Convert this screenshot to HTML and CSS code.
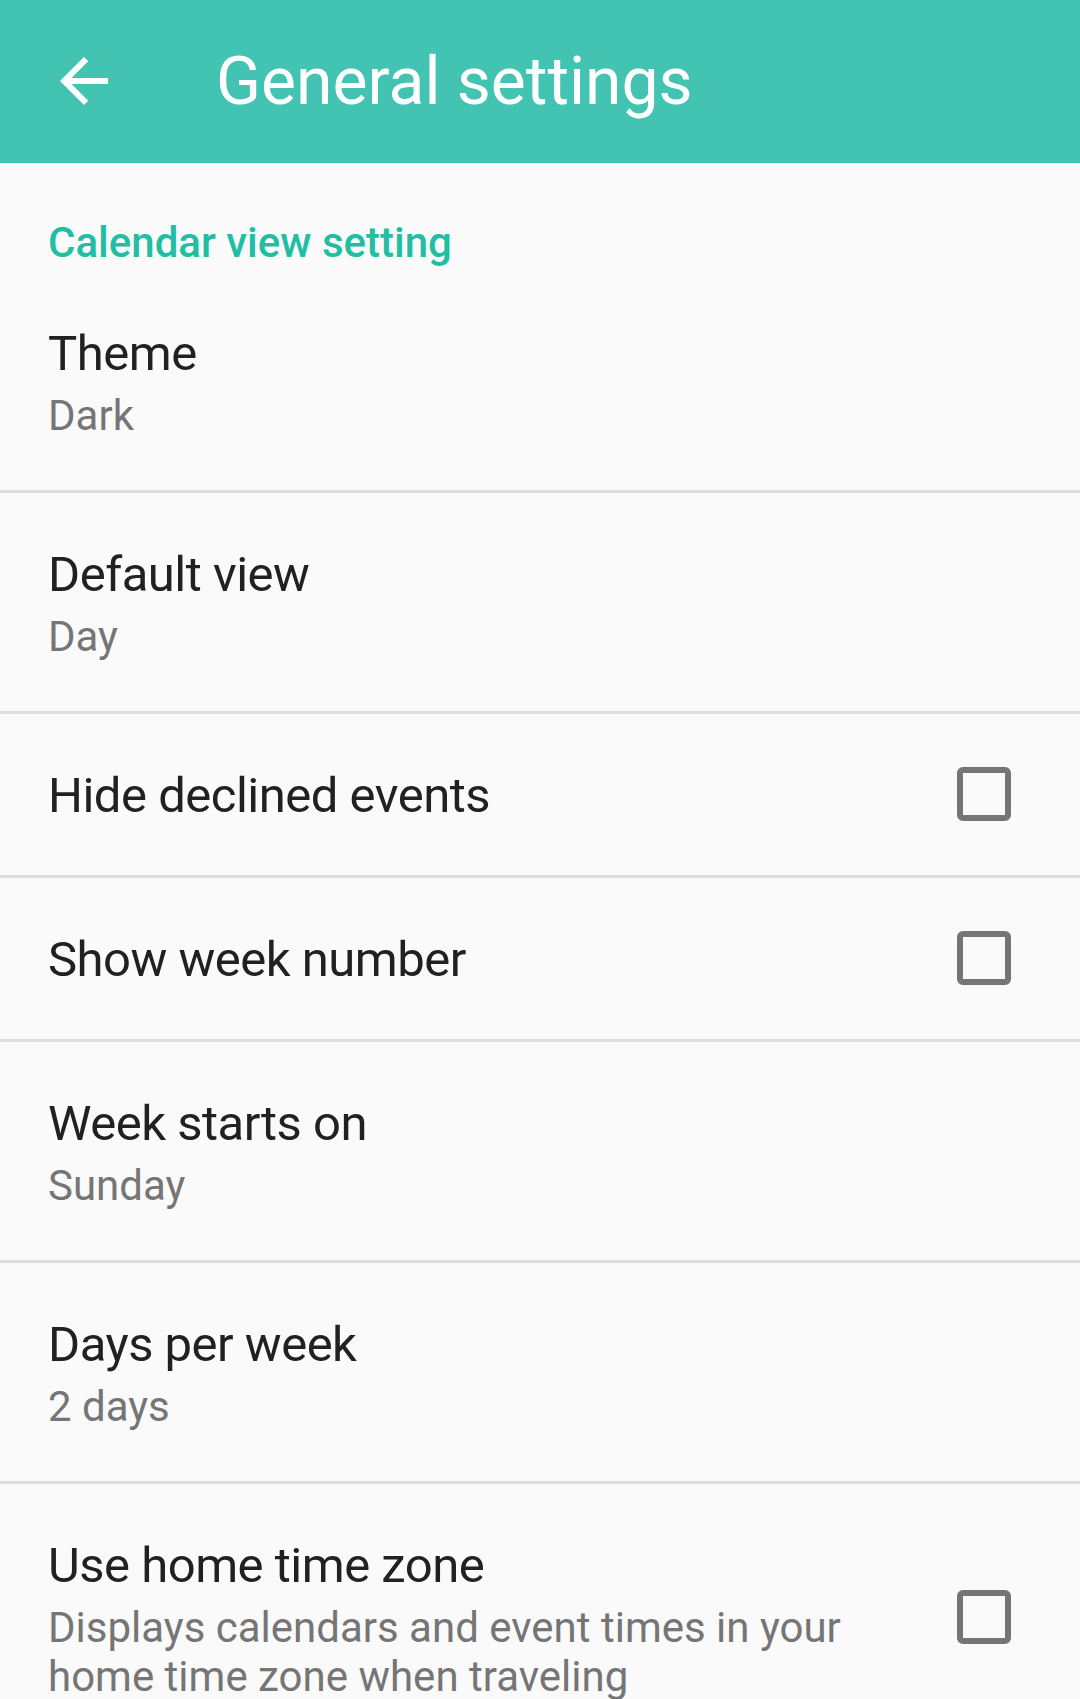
FILE: index.html
```html
<!DOCTYPE html>
<html lang="en">
<head>
<meta charset="utf-8">
<title>General settings</title>
<link rel="stylesheet" href="styles.css">
</head>
<body>
<header class="toolbar">
  <div class="nav-icon">
    <svg viewBox="0 0 24 24" width="72" height="72"><path fill="#fff" d="M20 11H7.83l5.59-5.59L12 4l-8 8 8 8 1.41-1.41L7.83 13H20v-2z"/></svg>
  </div>
  <h1 class="toolbar-title">General settings</h1>
</header>
<main class="prefs">
  <div class="category">Calendar view setting</div>
  <div class="pref">
    <div class="pref-text">
      <div class="pref-title">Theme</div>
      <div class="pref-summary">Dark</div>
    </div>
  </div>
  <div class="pref">
    <div class="pref-text">
      <div class="pref-title">Default view</div>
      <div class="pref-summary">Day</div>
    </div>
  </div>
  <div class="pref">
    <div class="pref-text">
      <div class="pref-title">Hide declined events</div>
    </div>
    <div class="checkbox"></div>
  </div>
  <div class="pref">
    <div class="pref-text">
      <div class="pref-title">Show week number</div>
    </div>
    <div class="checkbox"></div>
  </div>
  <div class="pref">
    <div class="pref-text">
      <div class="pref-title">Week starts on</div>
      <div class="pref-summary">Sunday</div>
    </div>
  </div>
  <div class="pref">
    <div class="pref-text">
      <div class="pref-title">Days per week</div>
      <div class="pref-summary">2 days</div>
    </div>
  </div>
  <div class="pref pref-last">
    <div class="pref-text">
      <div class="pref-title">Use home time zone</div>
      <div class="pref-summary">Displays calendars and event times in your home time zone when traveling</div>
    </div>
    <div class="checkbox"></div>
  </div>
</main>
</body>
</html>
```

FILE: styles.css
```css
html, body {
  margin: 0;
  padding: 0;
  background: #fafafa;
  font-family: Roboto, "Noto Sans", "Liberation Sans", sans-serif;
}

.toolbar {
  height: 163px;
  background: #43c4b2;
  display: flex;
  align-items: center;
}

.nav-icon {
  width: 72px;
  height: 72px;
  margin-left: 48px;
  margin-top: -2px;
  display: flex;
}

.toolbar-title {
  margin: 0 0 0 96px;
  font-size: 66px;
  font-weight: 400;
  color: #ffffff;
  line-height: 80px;
}

.prefs {
  display: flex;
  flex-direction: column;
}

.category {
  padding: 53px 48px 3px;
  font-size: 42px;
  line-height: 53px;
  font-weight: 500;
  color: #22bea4;
}

.pref {
  display: flex;
  align-items: center;
  padding: 52px 0 49px 48px;
  border-bottom: 3px solid #dedede;
}

.pref-last {
  border-bottom: none;
}

.pref-text {
  flex: 1;
  min-width: 0;
  display: flex;
  flex-direction: column;
  gap: 7px;
}

.pref-title {
  font-size: 49px;
  line-height: 60px;
  letter-spacing: -0.5px;
  color: #212121;
}

.pref-summary {
  font-size: 42px;
  line-height: 49px;
  color: #757575;
  padding-bottom: 1px;
}

.checkbox {
  width: 42px;
  height: 42px;
  border: 6px solid #757575;
  border-radius: 6px;
  margin: 0 69px 5px 40px;
  flex-shrink: 0;
}
```
